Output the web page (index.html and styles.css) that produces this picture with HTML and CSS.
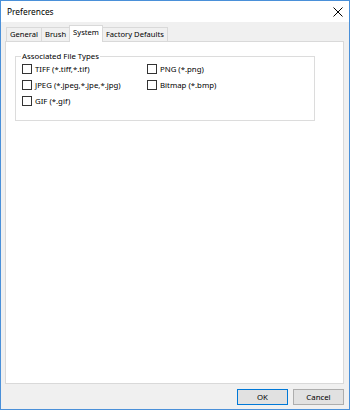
FILE: index.html
```html
<!DOCTYPE html>
<html lang="en">
<head>
    <meta charset="UTF-8">
    <title>Preferences</title>
    <link rel="stylesheet" href="styles.css">
</head>
<body>
    <div class="window">
        <div class="titlebar">
            <span class="title">Preferences</span>
            <svg class="close" width="10" height="10" viewBox="0 0 10 10">
                <path d="M0.5 0.5 L9.5 9.5 M9.5 0.5 L0.5 9.5" stroke="#000" stroke-width="1" fill="none"/>
            </svg>
        </div>

        <div class="content">
            <div class="tabs">
                <div class="tab">General</div>
                <div class="tab">Brush</div>
                <div class="tab active">System</div>
                <div class="tab">Factory Defaults</div>
            </div>

            <div class="panel">
                <fieldset class="group">
                    <legend>Associated File Types</legend>
                    <div class="options">
                        <label class="option"><span class="check"></span>TIFF (*.tiff,*.tif)</label>
                        <label class="option"><span class="check"></span>PNG (*.png)</label>
                        <label class="option"><span class="check"></span>JPEG (*.jpeg,*.jpe,*.jpg)</label>
                        <label class="option"><span class="check"></span>Bitmap (*.bmp)</label>
                        <label class="option"><span class="check"></span>GIF (*.gif)</label>
                    </div>
                </fieldset>
            </div>

            <div class="buttons">
                <button class="btn default">OK</button>
                <button class="btn">Cancel</button>
            </div>
        </div>
    </div>
</body>
</html>
```

FILE: styles.css
```css
body {
    margin: 0;
    padding: 0;
    font-family: "Noto Sans", "DejaVu Sans", sans-serif;
    font-size: 7.8px;
    color: #000000;
}
.window {
    width: 350px;
    height: 410px;
    box-sizing: border-box;
    border: 1px solid #4a90d9;
    background-color: #f0f0f0;
    display: flex;
    flex-direction: column;
}
.titlebar {
    height: 21px;
    background-color: #ffffff;
    display: flex;
    align-items: center;
    justify-content: space-between;
    padding: 0 6px 0 6px;
}
.title {
    font-size: 8.4px;
}
.content {
    flex: 1;
    display: flex;
    flex-direction: column;
    padding: 4px 5px 0 4px;
}
.tabs {
    display: flex;
    padding-left: 1px;
    height: 15px;
    align-items: flex-end;
    position: relative;
    z-index: 1;
}
.tab {
    height: 13px;
    line-height: 13px;
    padding: 0 3px;
    font-size: 7.6px;
    border: 1px solid #d9d9d9;
    border-bottom: none;
    margin-right: -1px;
    background-color: #f0f0f0;
}
.tab.active {
    height: 15px;
    background-color: #ffffff;
    margin-bottom: -1px;
    padding-bottom: 1px;
}
.panel {
    height: 343px;
    box-sizing: border-box;
    background-color: #ffffff;
    border: 1px solid #d9d9d9;
    padding: 9px 28px 0 9px;
}
.group {
    margin: 0;
    height: 70px;
    box-sizing: border-box;
    border: 1px solid #dcdcdc;
    padding: 2px 6px 0 6px;
}
.group legend {
    padding: 0 1px;
    margin-left: -1px;
}
.options {
    display: grid;
    grid-template-columns: 125px 1fr;
    row-gap: 4px;
}
.option {
    display: flex;
    align-items: center;
    height: 12px;
}
.check {
    width: 8px;
    height: 8px;
    border: 1px solid #333333;
    margin-right: 3px;
    background-color: #ffffff;
}
.buttons {
    display: flex;
    justify-content: flex-end;
    gap: 5px;
    padding-top: 5px;
}
.btn {
    width: 51px;
    height: 16px;
    font-family: inherit;
    font-size: 7.8px;
    background-color: #e1e1e1;
    border: 1px solid #adadad;
    padding: 0;
    color: #000000;
}
.btn.default {
    border-color: #0078d7;
}
```
